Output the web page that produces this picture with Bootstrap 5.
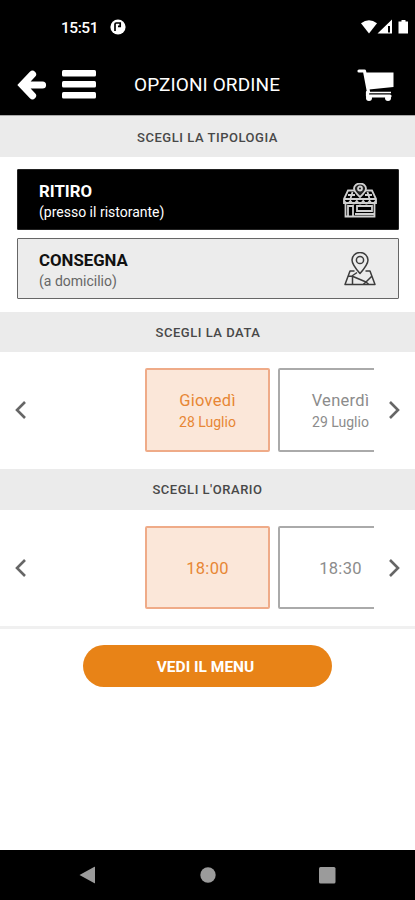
<!DOCTYPE html>
<html lang="it">
<head>
<meta charset="utf-8">
<meta name="viewport" content="width=device-width, initial-scale=1">
<title>Opzioni ordine</title>
<link href="https://cdn.jsdelivr.net/npm/bootstrap@5.3.0/dist/css/bootstrap.min.css" rel="stylesheet">
<style>
body{font-family:Roboto,"Liberation Sans",sans-serif;color:#333;line-height:1.2}
svg{display:block;flex:none}
.screen{width:415px;height:900px}
.status{height:54px;padding:0 6px 0 61px}
.clock{font-size:15.5px;font-weight:500;line-height:20px;letter-spacing:-.45px;width:48px;padding-top:1px}
.appbar{height:61px;padding:0 21px 0 17px}
.apptitle{font-size:19px;line-height:24px;letter-spacing:.1px;width:150px;margin-left:38px;padding-top:1px}
.menu-icon{margin-left:15px}
.section-band{background:#ebebeb;height:41px;font-size:13px;font-weight:500;letter-spacing:.52px;color:#484848;padding-top:1px}
.section-band.first{height:42px;padding-top:2px;border-top:1px solid #aaa}
.section-band.second{height:40px;padding:2px 0 0 1px}
.choices{padding:12px 16px 13px 17px;gap:8px}
.choice{height:61px;border:1px solid #666;border-radius:1px;background:#ececec;padding:2px 21px 0;color:#666;font-size:14px}
.choice strong{display:block;font-size:16.8px;line-height:21px;color:#111;font-weight:700;padding-top:1px}
.choice span{display:block;line-height:20px;white-space:nowrap}
.choice.active{background:#000;color:#fff;border-color:#222}
.choice.active strong{color:#fff}
.slider{height:117px;padding:0 14px 1px}
.slider.times{height:116px}
.track{width:229px;gap:8px;margin-left:117px}
.slot{width:125px;height:84px;border:2px solid #aaa;border-radius:2px;color:#8c8c8c;padding-top:1px}
.times .slot{height:83px;padding-top:2px}
.slot.picked{border-color:#efab88;background:#fbe7d9;color:#e78634}
.slot .big{font-size:16.5px;line-height:22px;letter-spacing:.3px}
.slot .sub{font-size:14px;line-height:20px}
.footer-line{height:3px;background:#f0f0f0}
.order-btn{width:249px;height:42px;margin-top:16px;background:#e88317;color:#fff;font-size:15.5px;font-weight:700}
.order-btn:hover{background:#d97710;color:#fff}
.order-btn span{display:block;padding:3px 4px 0 0}
.sysnav{height:50px;padding-left:79px}
</style>
</head>
<body class="bg-white m-0">
<div class="screen d-flex flex-column overflow-hidden">
  <header class="bg-black text-white">
    <div class="status d-flex align-items-center">
      <span class="clock">15:51</span>
      <svg width="18" height="18" viewBox="0 0 18 18"><circle cx="9" cy="9" r="7.6" fill="#fff"/><path d="M6 13V6.2Q6 5 7.2 5H11.2V8.4H9" fill="none" stroke="#000" stroke-width="1.7"/></svg>
      <svg class="ms-auto" width="48" height="18" viewBox="0 0 48 18" fill="#fff"><path d="M0 5.2Q8 -.8 16 5.2L8 15.500Z"/><path d="M16.500 15.500L31 1.500V15.500ZM27 8V14.500H29V8Z" fill-rule="evenodd"/><path d="M37.500 3.500H40.500V2H44.500V3.500H47V15.500H37.500Z"/></svg>
    </div>
    <nav class="appbar d-flex align-items-center">
      <svg width="30" height="32" viewBox="0 0 30 32"><path d="M15.500 5.300L5.300 16L15.500 26.700M6 16H25.500" fill="none" stroke="#fff" stroke-width="7.200" stroke-linecap="round"/></svg>
      <svg class="menu-icon" width="34" height="32" viewBox="0 0 34 32" fill="#fff"><rect y="1" width="34" height="6.500" rx="1.500"/><rect y="12" width="34" height="6.500" rx="1.500"/><rect y="23" width="34" height="6.500" rx="1.500"/></svg>
      <span class="apptitle text-nowrap">OPZIONI ORDINE</span>
      <svg class="ms-auto" width="37" height="34" viewBox="0 0 37 34"><path d="M2 3H7.500L11.500 24M10.500 24V28H33" fill="none" stroke="#fff" stroke-width="3.200" stroke-linecap="round" stroke-linejoin="round"/><path d="M8.500 4.500H36.500V19L12 21.500Z" fill="#fff"/><path d="M11 24.500H34" stroke="#fff" stroke-width="1.500"/><circle cx="12" cy="30" r="3" fill="#fff"/><circle cx="31" cy="30" r="3" fill="#fff"/></svg>
    </nav>
  </header>
  <main class="flex-grow-1 d-flex flex-column">
    <div class="section-band first d-flex align-items-center justify-content-center"><span>SCEGLI LA TIPOLOGIA</span></div>
    <div class="choices d-flex flex-column">
      <div class="choice active d-flex align-items-center justify-content-between">
        <div><strong>RITIRO</strong><span>(presso il ristorante)</span></div>
        <svg width="34" height="36" viewBox="0 0 34 36" fill="none" stroke="#d0d0d0" stroke-width="1.800"><path d="M12 7.500H5L1 16V20H33V16L29 7.500H22M2.500 21V33.500H31.500V21M1 16H33M5 33.500V23H10V33.500M14 23H29V28H14Z"/><path d="M1 17.500Q4 23 7.400 18Q10.600 23 13.800 18Q17 23 20.200 18Q23.400 23 26.600 18Q30 23 33 17.500M7.400 16L9.500 9M26.600 16L24.500 9M5 12H12M22 12H29M12 31H31"/><path d="M17 14Q11 8.500 11 5.500A6 5 0 0 1 23 5.500Q23 8.500 17 14Z" fill="#222"/><circle cx="17" cy="5.500" r="2"/></svg>
      </div>
      <div class="choice d-flex align-items-center justify-content-between">
        <div><strong>CONSEGNA</strong><span>(a domicilio)</span></div>
        <svg width="34" height="36" viewBox="0 0 34 36" fill="none" stroke="#3c3c3c" stroke-width="1.500" stroke-linejoin="round"><path d="M17 21.500Q9 12.500 9 8A8 7.500 0 0 1 25 8Q25 12.500 17 21.500Z"/><circle cx="17" cy="8" r="3.600"/><path d="M11.500 19H7L2 32.500H32L27 19H22.500M5.500 24L10 24.500L23 30L29 24M9.500 24.500V32M23 30L20 32.500M23 30L26 32.500M9 24L14 20.500"/></svg>
      </div>
    </div>
    <div class="section-band second d-flex align-items-center justify-content-center"><span>SCEGLI LA DATA</span></div>
    <div class="slider d-flex align-items-center">
      <svg width="14" height="20" viewBox="0 0 14 20"><path d="M11 2L3 10L11 18" fill="none" stroke="#666" stroke-width="2.600"/></svg>
      <div class="track d-flex overflow-hidden">
        <div class="slot picked flex-shrink-0 d-flex flex-column align-items-center justify-content-center"><span class="big">Giovedì</span><span class="sub">28 Luglio</span></div>
        <div class="slot flex-shrink-0 d-flex flex-column align-items-center justify-content-center"><span class="big">Venerdì</span><span class="sub">29 Luglio</span></div>
      </div>
      <svg class="ms-auto" width="14" height="20" viewBox="0 0 14 20"><path d="M3 2L11 10L3 18" fill="none" stroke="#666" stroke-width="2.600"/></svg>
    </div>
    <div class="section-band d-flex align-items-center justify-content-center"><span>SCEGLI L'ORARIO</span></div>
    <div class="slider times d-flex align-items-center">
      <svg width="14" height="20" viewBox="0 0 14 20"><path d="M11 2L3 10L11 18" fill="none" stroke="#666" stroke-width="2.600"/></svg>
      <div class="track d-flex overflow-hidden">
        <div class="slot picked flex-shrink-0 d-flex align-items-center justify-content-center"><span class="big">18:00</span></div>
        <div class="slot flex-shrink-0 d-flex align-items-center justify-content-center"><span class="big">18:30</span></div>
      </div>
      <svg class="ms-auto" width="14" height="20" viewBox="0 0 14 20"><path d="M3 2L11 10L3 18" fill="none" stroke="#666" stroke-width="2.600"/></svg>
    </div>
    <div class="footer-line"></div>
    <button class="btn order-btn rounded-pill border-0 align-self-center p-0" type="button"><span>VEDI IL MENU</span></button>
  </main>
  <footer class="sysnav bg-black d-flex align-items-center">
    <svg width="258" height="18" viewBox="0 0 258 18" fill="#9b9b9b"><path d="M.5 9L15.500 .8Q16 .5 16 1V17Q16 17.500 15.500 17.200Z"/><circle cx="129" cy="9" r="7.700"/><rect x="240" y="1" width="16.500" height="16.500" rx="1.500"/></svg>
  </footer>
</div>
<script src="https://cdn.jsdelivr.net/npm/bootstrap@5.3.0/dist/js/bootstrap.bundle.min.js"></script>
</body>
</html>
